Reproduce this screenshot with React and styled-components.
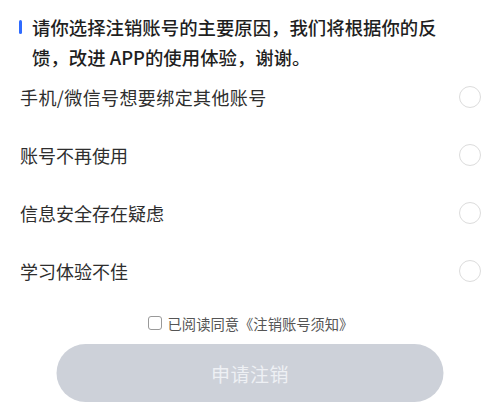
import React, { useState } from "react";
import styled, { createGlobalStyle } from "styled-components";

const Global = createGlobalStyle`
  html, body { margin: 0; padding: 0; background: #fff; }
  body { font-family: "Noto Sans CJK SC", "Noto Sans", sans-serif; -webkit-font-smoothing: antialiased; }
  * { box-sizing: border-box; }
`;

const Page = styled.div`
  width: 500px;
  height: 408px;
  padding: 12px 19px 0 20px;
  display: flex;
  flex-direction: column;
  overflow: hidden;
`;

const Header = styled.div`
  display: flex;
  align-items: flex-start;
  gap: 10px;
  padding-right: 20px;
  margin-bottom: 2px;
`;

const Bar = styled.span`
  flex: none;
  width: 3.5px;
  height: 14px;
  margin-top: 8px;
  margin-left: -1.5px;
  border-radius: 2px;
  background: #2f6bff;
`;

const Title = styled.div`
  font-size: 18.4px;
  line-height: 30px;
  font-weight: 500;
  color: #1f1f1f;
  max-width: 418px;
`;

const List = styled.div`
  display: flex;
  flex-direction: column;
  gap: 12px;
`;

const Row = styled.label`
  height: 46px;
  display: flex;
  align-items: center;
  justify-content: space-between;
  cursor: pointer;
`;

const RowText = styled.span`
  font-size: 18px;
  color: #2e2e2e;
  letter-spacing: ${(p) => (p.$wide ? "0.4px" : "0")};
`;

const Radio = styled.span`
  width: 22px;
  height: 22px;
  border-radius: 50%;
  border: 1.5px solid ${(p) => (p.$on ? "#2f6bff" : "#dcdcdc")};
  background: ${(p) => (p.$on ? "#2f6bff" : "#fff")};
  flex: none;
`;

const Agree = styled.label`
  margin-top: 19px;
  display: flex;
  align-items: center;
  justify-content: center;
  gap: 6px;
  height: 20px;
  font-size: 14.3px;
  color: #555;
`;

const Box = styled.span`
  width: 14px;
  height: 14px;
  border: 1.2px solid #999;
  border-radius: 3px;
  flex: none;
`;

const Submit = styled.button`
  margin: 11px auto 0;
  width: 387px;
  height: 58px;
  border: none;
  border-radius: 29px;
  background: #cdd1d9;
  color: #eef0f4;
  font-family: inherit;
  font-size: 19px;
  letter-spacing: 0.5px;
  transform: translateX(-0.5px);
`;

const reasons = [
  "手机/微信号想要绑定其他账号",
  "账号不再使用",
  "信息安全存在疑虑",
  "学习体验不佳",
];

export default function App() {
  const [sel, setSel] = useState(-1);
  return (
    <>
      <Global />
      <Page>
        <Header>
          <Bar />
          <Title>请你选择注销账号的主要原因，我们将根据你的反馈，改进 APP的使用体验，谢谢。</Title>
        </Header>
        <List>
          {reasons.map((r, i) => (
            <Row key={r} onClick={() => setSel(i)}>
              <RowText $wide={i === 0}>{r}</RowText>
              <Radio $on={sel === i} />
            </Row>
          ))}
        </List>
        <Agree>
          <Box />
          已阅读同意《注销账号须知》
        </Agree>
        <Submit type="button">申请注销</Submit>
      </Page>
    </>
  );
}
